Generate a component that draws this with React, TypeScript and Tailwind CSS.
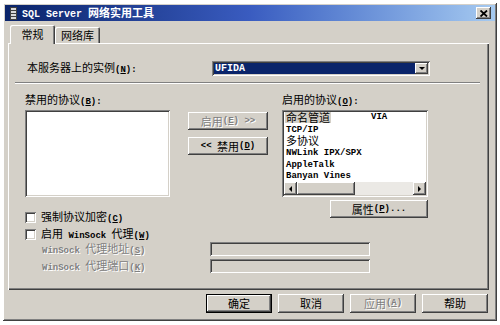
import clsx from "clsx";

// Win2000 style 3D edges
const RAISED =
  "shadow-[inset_-1px_-1px_0_#404040,inset_1px_1px_0_#ffffff,inset_-2px_-2px_0_#808080]";
const DEFAULT_BTN =
  "shadow-[inset_0_0_0_1px_#000000,inset_-2px_-2px_0_#404040,inset_2px_2px_0_#ffffff,inset_-3px_-3px_0_#808080]";
const SUNKEN =
  "shadow-[inset_1px_1px_0_#808080,inset_-1px_-1px_0_#ffffff,inset_2px_2px_0_#404040,inset_-2px_-2px_0_#d4d0c8]";
const DISABLED = "text-[#808080] [text-shadow:1px_1px_0_#ffffff]";

// Splits a label into CJK / ascii runs, "&X" underlines X (mnemonic)
function Txt({ s, mono = "text-[9px]" }: { s: string; mono?: string }) {
  const runs: { ascii: boolean; text: string }[] = [];
  for (const ch of s) {
    const ascii = ch.charCodeAt(0) < 128;
    const last = runs[runs.length - 1];
    if (last && last.ascii === ascii) last.text += ch;
    else runs.push({ ascii, text: ch });
  }
  return (
    <>
      {runs.map((r, i) => {
        const body = r.text.split(/&(.)/).map((p, j) => (j % 2 ? <u key={j}>{p}</u> : p));
        return r.ascii ? (
          <span key={i} className={clsx("font-['Liberation_Mono',monospace] font-bold whitespace-pre", mono)}>
            {body}
          </span>
        ) : (
          <span key={i}>{body}</span>
        );
      })}
    </>
  );
}

function Btn({
  label,
  className,
  disabled,
  isDefault,
}: {
  label: string;
  className?: string;
  disabled?: boolean;
  isDefault?: boolean;
}) {
  return (
    <div
      className={clsx(
        "flex items-center justify-center bg-[#d4d0c8]",
        isDefault ? DEFAULT_BTN : RAISED,
        disabled && DISABLED,
        className
      )}
    >
      <Txt s={label} />
    </div>
  );
}

function Check({ label }: { label: string }) {
  return (
    <div className="flex items-center h-[11px]">
      <div className={clsx("w-[11px] h-[11px] bg-white", SUNKEN)} />
      <span className="ml-[5px]">
        <Txt s={label} />
      </span>
    </div>
  );
}

function Arrow({ dir }: { dir: "left" | "right" | "down" }) {
  const pts = dir === "left" ? "5,2 5,8 2,5" : dir === "right" ? "2,2 2,8 5,5" : "1,3 7,3 4,6";
  return (
    <svg width={dir === "down" ? 8 : 7} height="10" viewBox={dir === "down" ? "0 0 8 10" : "0 0 7 10"}>
      <polygon points={pts} fill="#000" />
    </svg>
  );
}

const COL1 = ["命名管道", "TCP/IP", "多协议", "NWLink IPX/SPX", "AppleTalk", "Banyan Vines"];

export default function App() {
  return (
    <div className="w-[500px] h-[325px] bg-white p-[3px] font-['Noto_Sans_CJK_SC',sans-serif] text-[11px] leading-none text-black">
      <div className={clsx("h-[318px] bg-[#d4d0c8] p-[2px]", RAISED)}>
        {/* Title bar */}
        <div className="h-[16px] flex items-center bg-linear-to-r from-[#0a246a] via-[#3a5cc0] to-[#a6caf0] pl-[5px] pr-[4px]">
          <svg width="7" height="13" viewBox="0 0 7 13">
            <rect x="0.5" y="0.5" width="6" height="12" fill="#d8d8d8" stroke="#404040" />
            <rect x="1" y="3" width="5" height="1" fill="#404040" />
            <rect x="1" y="6" width="5" height="1" fill="#404040" />
            <rect x="1" y="9" width="5" height="1" fill="#404040" />
          </svg>
          <span className="ml-[5px] text-white font-bold">
            <Txt s="SQL Server 网络实用工具" mono="text-[10px]" />
          </span>
          <div
            className={clsx(
              "ml-auto w-[15px] h-[12px] bg-[#d4d0c8] flex items-center justify-center",
              RAISED
            )}
          >
            <svg width="8" height="7" viewBox="0 0 8 7">
              <path d="M0.5 0.5 L7 6.5 M7 0.5 L0.5 6.5" stroke="#000" strokeWidth="1.8" />
            </svg>
          </div>
        </div>

        {/* Tabs */}
        <div className="flex items-end h-[18px] mt-[4px] ml-[5px]">
          <div className="relative z-10 h-[19px] w-[45px] -mb-px bg-[#d4d0c8] rounded-t-[2px] shadow-[inset_1px_1px_0_#ffffff,inset_-1px_0_0_#404040,inset_-2px_0_0_#808080] flex items-center justify-center pb-[1px]">
            常规
          </div>
          <div className="h-[16px] w-[45px] bg-[#d4d0c8] rounded-t-[2px] shadow-[inset_1px_1px_0_#ffffff,inset_-1px_0_0_#404040,inset_-2px_0_0_#808080] flex items-center justify-center">
            网络库
          </div>
        </div>

        {/* Tab panel */}
        <div
          className={clsx(
            "h-[247px] ml-[3px] mr-[6px] pt-[18px]",
            "shadow-[inset_1px_1px_0_#ffffff,inset_-1px_-1px_0_#404040,inset_-2px_-2px_0_#808080]"
          )}
        >
          <div className="flex items-center h-[15px]">
            <span className="ml-[19px] w-[185px]">
              <Txt s="本服务器上的实例(&N):" />
            </span>
            <div className={clsx("w-[218px] h-[15px] bg-white p-[2px] flex", SUNKEN)}>
              <div className="flex-1 bg-[#0a246a] text-white flex items-center pl-[1px]">
                <Txt s="UFIDA" mono="text-[10px]" />
              </div>
              <div className={clsx("w-[13px] bg-[#d4d0c8] flex items-center justify-center", RAISED)}>
                <Arrow dir="down" />
              </div>
            </div>
          </div>

          <div className="mt-[6px] ml-[7px] w-[465px] h-[2px] border-t border-[#808080] border-b border-b-white" />

          <div className="flex mt-[10px] ml-[17px]">
            <div className="w-[145px]">
              <div className="h-[16px]">
                <Txt s="禁用的协议(&B):" />
              </div>
              <div className={clsx("h-[87px] bg-white", SUNKEN)} />
            </div>

            <div className="ml-[18px] w-[80px] pt-[18px] flex flex-col gap-[7px]">
              <Btn label="启用(&E) >>" disabled className="h-[18px]" />
              <Btn label="<< 禁用(&D)" className="h-[18px]" />
            </div>

            <div className="ml-[14px] w-[146px] flex flex-col">
              <div className="h-[16px]">
                <Txt s="启用的协议(&O):" />
              </div>
              <div className={clsx("h-[87px] bg-white p-[2px] flex flex-col", SUNKEN)}>
                <div className="flex pl-[1px]">
                  <div className="w-[85px] flex flex-col">
                    {COL1.map((item, i) => (
                      <div key={item} className="h-[11.5px] flex items-center">
                        <span
                          className={clsx(
                            "inline-block leading-[11px] px-[1px]",
                            i === 0 && "bg-[#d4d0c8]"
                          )}
                        >
                          <Txt s={item} />
                        </span>
                      </div>
                    ))}
                  </div>
                  <div className="flex flex-col">
                    <div className="h-[11.5px] flex items-center px-[1px]">
                      <Txt s="VIA" />
                    </div>
                  </div>
                </div>
                {/* horizontal scrollbar */}
                <div className="mt-auto h-[13px] flex bg-[#ebe9e5]">
                  <div className={clsx("w-[13px] bg-[#d4d0c8] flex items-center justify-center", RAISED)}>
                    <Arrow dir="left" />
                  </div>
                  <div className={clsx("w-[58px] bg-[#d4d0c8]", RAISED)} />
                  <div className={clsx("ml-auto w-[13px] bg-[#d4d0c8] flex items-center justify-center", RAISED)}>
                    <Arrow dir="right" />
                  </div>
                </div>
              </div>
              <Btn label="属性(&P)..." className="mt-[3px] self-end w-[98px] h-[18px]" />
            </div>
          </div>

          {/* Options */}
          <div className="-mt-[6px] flex flex-col">
            <div className="ml-[17px]">
              <Check label="强制协议加密(&C)" />
            </div>
            <div className="ml-[17px] mt-[6px]">
              <Check label="启用 WinSock 代理(&W)" />
            </div>
            <div className="flex items-center h-[14px] mt-[2px]">
              <span className={clsx("ml-[34px] w-[168px]", DISABLED)}>
                <Txt s="WinSock 代理地址(&S)" />
              </span>
              <div className={clsx("w-[160px] h-[14px] bg-[#d4d0c8]", SUNKEN)} />
            </div>
            <div className="flex items-center h-[14px] mt-[3px]">
              <span className={clsx("ml-[34px] w-[168px]", DISABLED)}>
                <Txt s="WinSock 代理端口(&K)" />
              </span>
              <div className={clsx("w-[160px] h-[14px] bg-[#d4d0c8]", SUNKEN)} />
            </div>
          </div>
        </div>

        {/* Dialog buttons */}
        <div className="flex justify-end gap-[6px] mt-[4px] mr-[7px]">
          <Btn label="确定" isDefault className="w-[66px] h-[19px]" />
          <Btn label="取消" className="w-[66px] h-[19px]" />
          <Btn label="应用(&A)" disabled className="w-[66px] h-[19px]" />
          <Btn label="帮助" className="w-[66px] h-[19px]" />
        </div>
      </div>
    </div>
  );
}
